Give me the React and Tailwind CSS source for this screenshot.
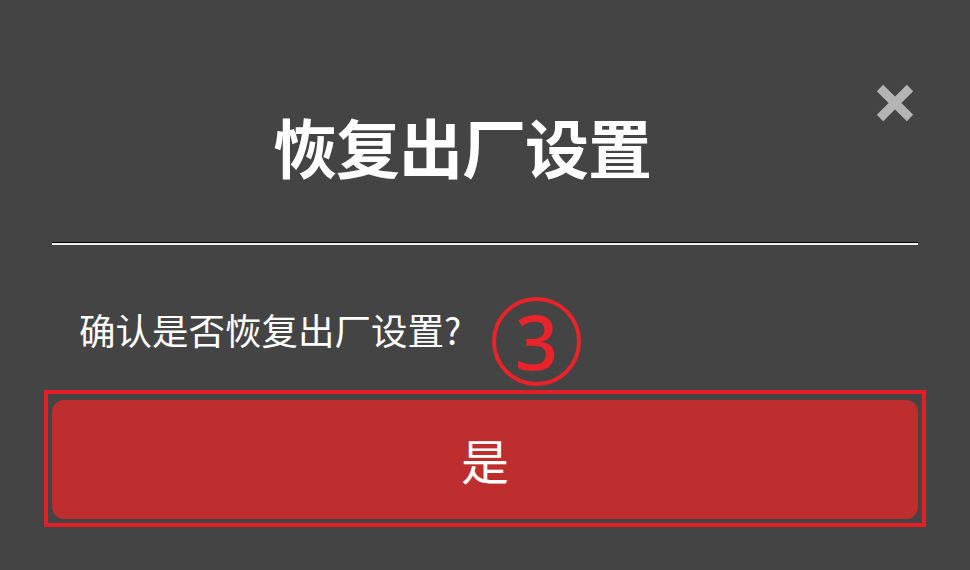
export default function App() {
  return (
    <div
      className="relative w-[970px] h-[570px] bg-[#444444] overflow-hidden"
      style={{ fontFamily: '"Noto Sans CJK SC", "Noto Sans", sans-serif' }}
    >
      <div className="flex flex-col px-[52px]">
        <div className="relative h-[242px]">
          <div className="flex justify-center pr-[46px] pt-[113px]">
            <h1 className="text-[64px] leading-[64px] font-bold text-white tracking-[-1px]">恢复出厂设置</h1>
          </div>
          <button className="absolute right-[2px] top-[82px] w-[42px] h-[42px] flex items-center justify-center">
            <svg width="40" height="40" viewBox="0 0 40 40">
              <path d="M5 5 L35 35 M35 5 L5 35" stroke="#b4b4b4" strokeWidth="9" strokeLinecap="butt" />
            </svg>
          </button>
        </div>
        <div className="h-[1px] bg-black" />
        <div className="h-[2px] bg-[#f0f0f0]" />
        <div className="mt-[61px] pl-[27px] text-[36.5px] leading-[48px] text-white">确认是否恢复出厂设置?</div>
        <div className="mt-[46px] h-[119px] rounded-[12px] bg-[#bf2e2f] flex items-center justify-center">
          <span className="text-[48px] leading-[48px] text-white -mt-[2px]">是</span>
        </div>
      </div>
      <div className="absolute left-[44px] top-[390px] w-[882px] h-[137px] border-[4px] border-[#e41e26]" />
      <div className="absolute left-[492px] top-[297px] w-[89px] h-[89px] rounded-full border-[4px] border-[#e8232a] flex items-center justify-center">
        <span className="text-[76px] leading-[76px] font-medium text-[#e8232a] -mt-[2px]" style={{ fontFamily: '"Noto Sans", sans-serif' }}>3</span>
      </div>
    </div>
  );
}
